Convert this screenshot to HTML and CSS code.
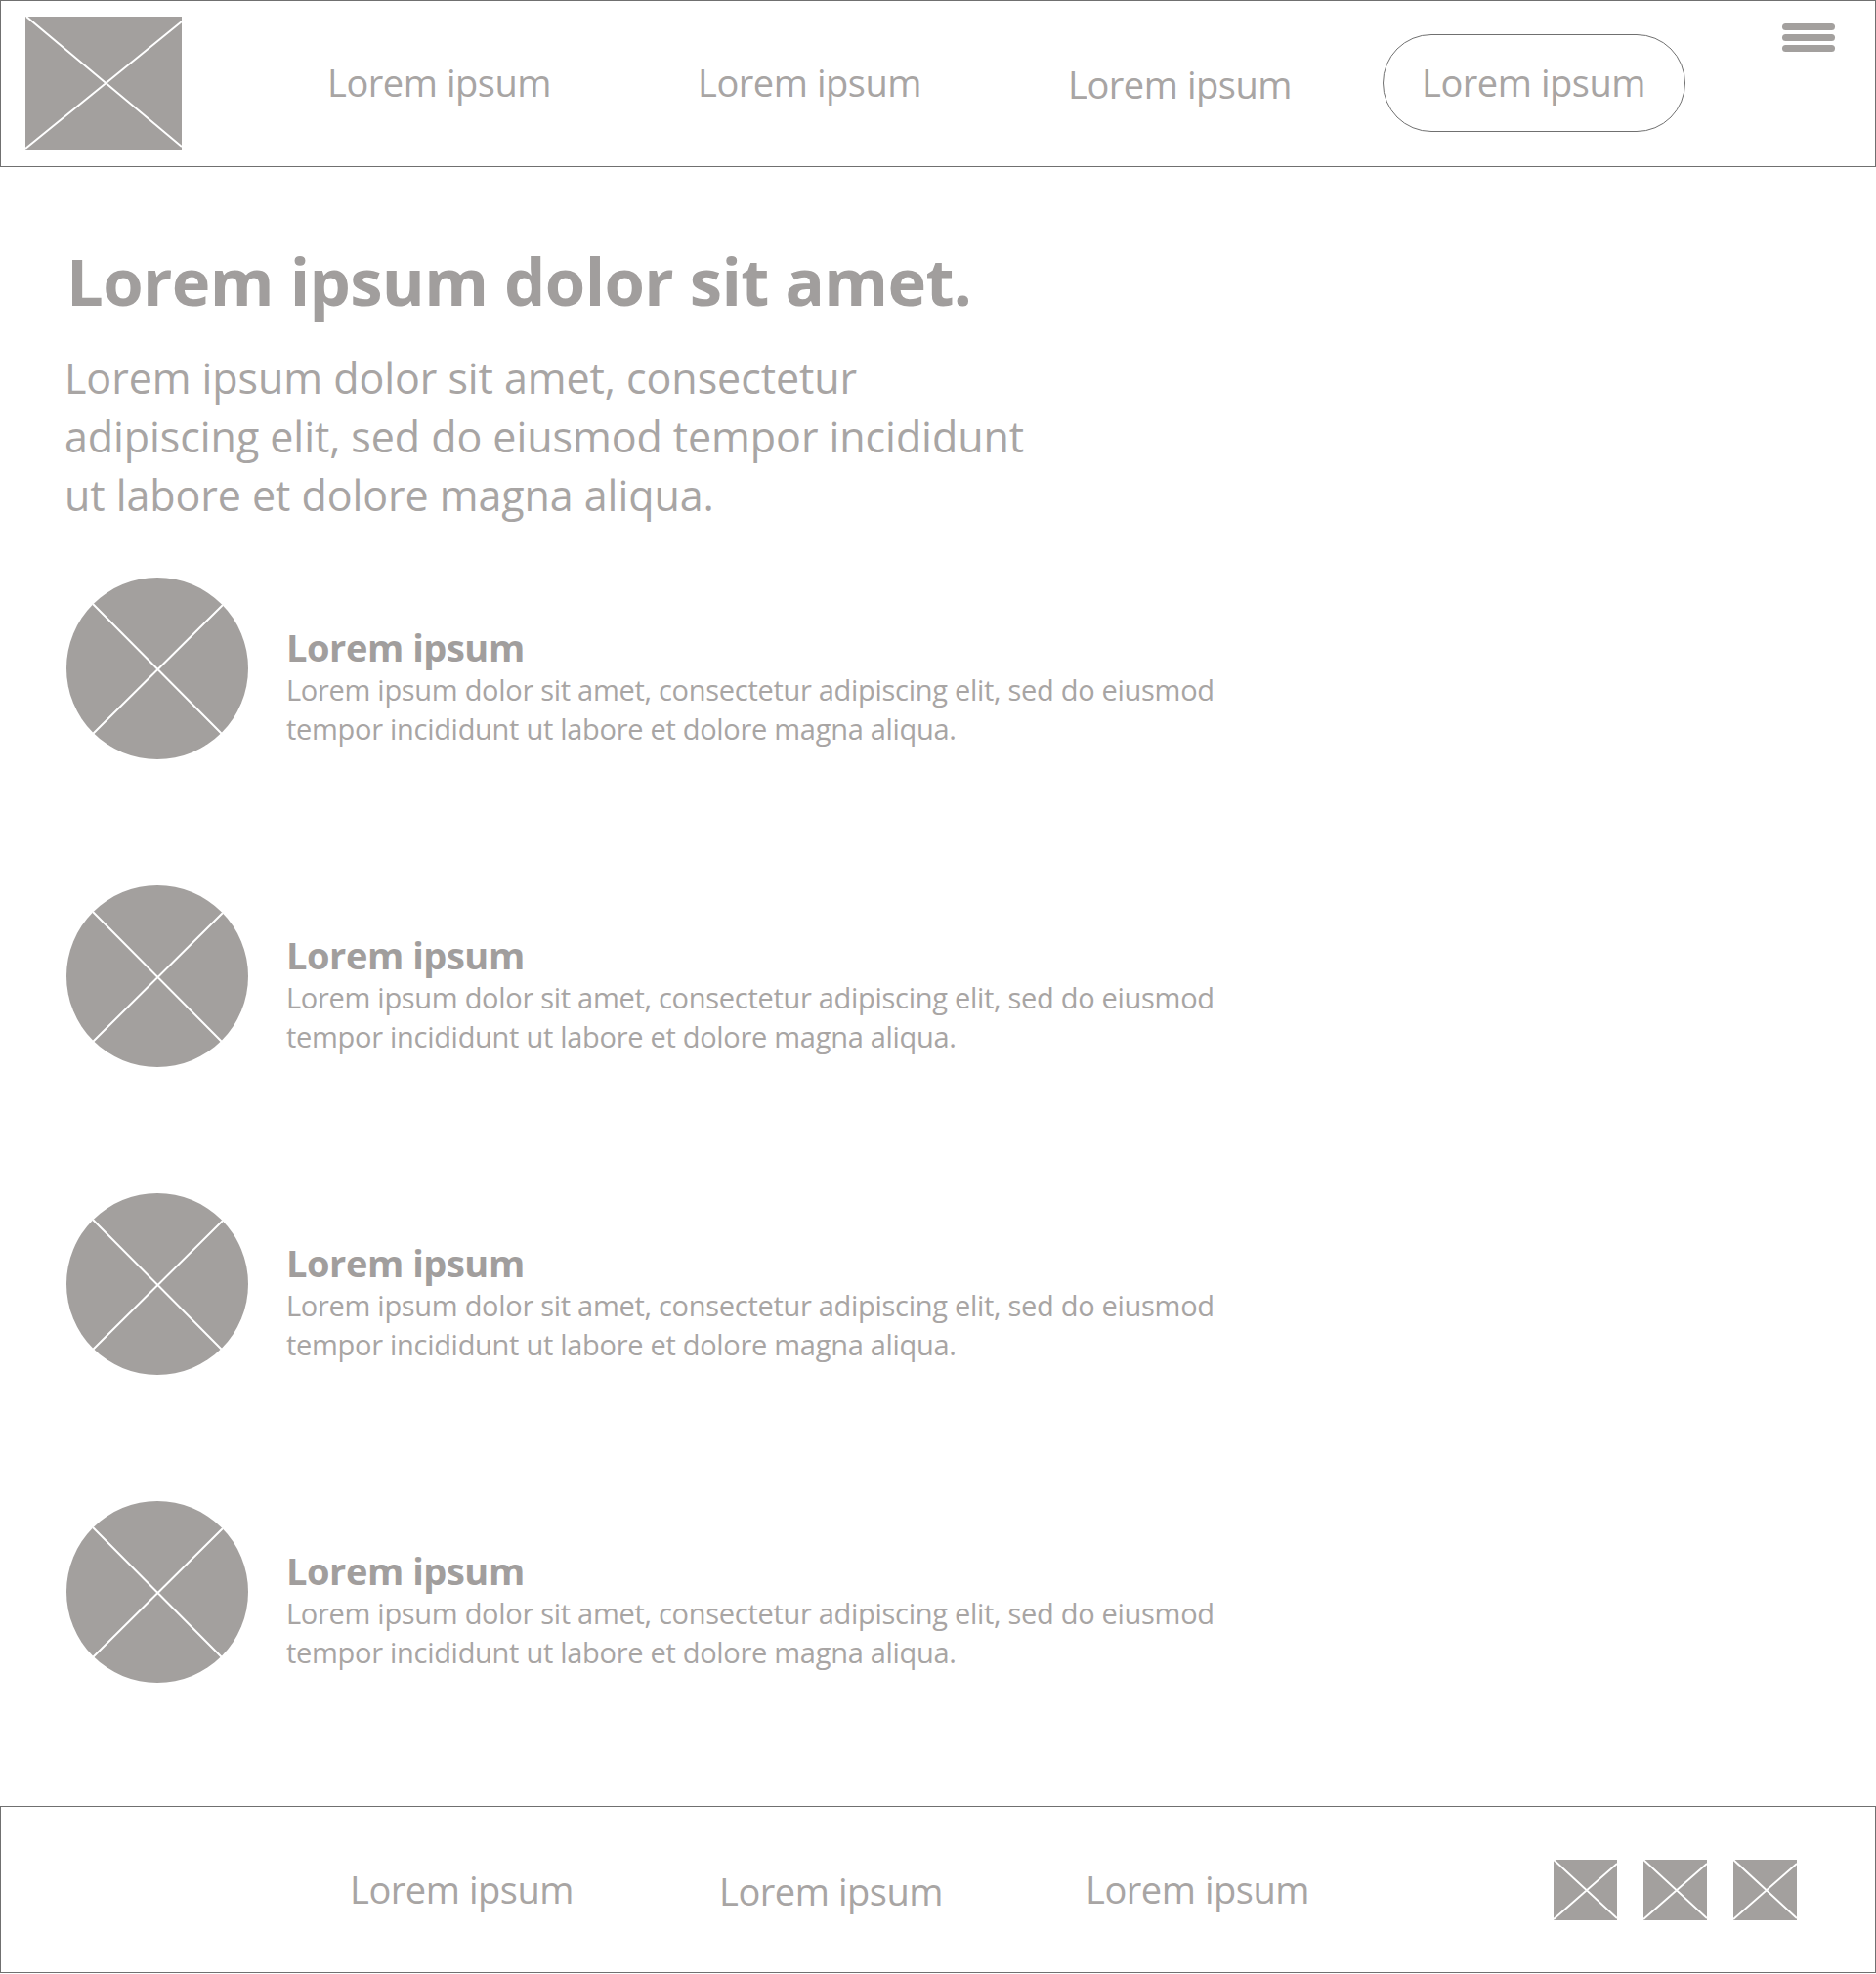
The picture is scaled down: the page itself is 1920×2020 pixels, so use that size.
FILE: index.html
```html
<!DOCTYPE html>
<html lang="la">
<head>
<meta charset="utf-8">
<title>Lorem ipsum</title>
<link rel="stylesheet" href="styles.css">
</head>
<body>
<svg class="defs" width="0" height="0" aria-hidden="true">
  <symbol id="ph-logo" viewBox="0 0 160 137" preserveAspectRatio="none">
    <rect width="160" height="137" fill="#a3a09e"/>
    <path d="M1 0 L160 133 M160 5 L0 135" stroke="#fff" stroke-width="2" fill="none"/>
  </symbol>
  <symbol id="ph-circle" viewBox="0 0 186 186">
    <circle cx="93" cy="93" r="93" fill="#a3a09e"/>
    <path d="M27 27 L159 160 M160 28 L27 160" stroke="#fff" stroke-width="2" fill="none"/>
  </symbol>
  <symbol id="ph-social" viewBox="0 0 65 62" preserveAspectRatio="none">
    <rect width="65" height="62" fill="#a3a09e"/>
    <path d="M0 0 L65 60 M65 4 L0 61" stroke="#fff" stroke-width="2" fill="none"/>
  </symbol>
</svg>

<header class="topbar">
  <svg class="logo"><use href="#ph-logo"/></svg>
  <nav class="topnav">
    <a class="navlink link-a">Lorem ipsum</a>
    <a class="navlink link-b">Lorem ipsum</a>
    <a class="navlink link-c low">Lorem ipsum</a>
    <a class="navlink pill">Lorem ipsum</a>
  </nav>
  <div class="burger"><span></span><span></span><span></span></div>
</header>

<main class="content">
  <h1 class="headline">Lorem ipsum dolor sit amet.</h1>
  <p class="lead">Lorem ipsum dolor sit amet, consectetur<br>adipiscing elit, sed do eiusmod tempor incididunt<br>ut labore et dolore magna aliqua.</p>
  <ul class="features">
    <li class="feature">
      <svg class="avatar"><use href="#ph-circle"/></svg>
      <div class="feature-text">
        <h2 class="feature-title">Lorem ipsum</h2>
        <p class="feature-body">Lorem ipsum dolor sit amet, consectetur adipiscing elit, sed do eiusmod<br>tempor incididunt ut labore et dolore magna aliqua.</p>
      </div>
    </li>
    <li class="feature">
      <svg class="avatar"><use href="#ph-circle"/></svg>
      <div class="feature-text">
        <h2 class="feature-title">Lorem ipsum</h2>
        <p class="feature-body">Lorem ipsum dolor sit amet, consectetur adipiscing elit, sed do eiusmod<br>tempor incididunt ut labore et dolore magna aliqua.</p>
      </div>
    </li>
    <li class="feature">
      <svg class="avatar"><use href="#ph-circle"/></svg>
      <div class="feature-text">
        <h2 class="feature-title">Lorem ipsum</h2>
        <p class="feature-body">Lorem ipsum dolor sit amet, consectetur adipiscing elit, sed do eiusmod<br>tempor incididunt ut labore et dolore magna aliqua.</p>
      </div>
    </li>
    <li class="feature">
      <svg class="avatar"><use href="#ph-circle"/></svg>
      <div class="feature-text">
        <h2 class="feature-title">Lorem ipsum</h2>
        <p class="feature-body">Lorem ipsum dolor sit amet, consectetur adipiscing elit, sed do eiusmod<br>tempor incididunt ut labore et dolore magna aliqua.</p>
      </div>
    </li>
  </ul>
</main>

<footer class="bottombar">
  <nav class="footnav">
    <a class="navlink foot-a">Lorem ipsum</a>
    <a class="navlink foot-b low">Lorem ipsum</a>
    <a class="navlink foot-c">Lorem ipsum</a>
  </nav>
  <div class="socials">
    <svg class="social"><use href="#ph-social"/></svg>
    <svg class="social"><use href="#ph-social"/></svg>
    <svg class="social"><use href="#ph-social"/></svg>
  </div>
</footer>
</body>
</html>
```
FILE: styles.css
```css
* { box-sizing: border-box; }
html, body { margin: 0; padding: 0; background: #fff; }
body {
  width: 1920px;
  height: 2020px;
  display: flex;
  flex-direction: column;
  font-family: "Open Sans", "Noto Sans", sans-serif;
  color: #a8a5a4;
}
.defs { position: absolute; }

.topbar {
  height: 171px;
  border: 1.5px solid #707070;
  display: flex;
  align-items: flex-start;
  padding: 16px 0 0 25px;
  flex: none;
}
.logo { width: 160px; height: 137px; flex: none; }
.topnav {
  display: flex;
  align-items: center;
  height: 135px;
  margin-left: 149px;
}
.navlink {
  font-size: 38px;
  line-height: 52px;
  white-space: nowrap;
  width: 229px;
  letter-spacing: -0.45px;
  padding-bottom: 2px;
}
.link-a { margin-right: 150px; }
.link-b { margin-right: 150px; }
.link-c { margin-right: 93px; }
.low { position: relative; top: 2px; }
.pill {
  width: 310px;
  height: 100px;
  border: 1px solid #707070;
  border-radius: 50px;
  padding: 0 0 2px 39px;
  display: flex;
  align-items: center;
}
.burger {
  width: 54px;
  margin: 7px 0 0 99px;
  display: flex;
  flex-direction: column;
  gap: 4px;
  flex: none;
}
.burger span { height: 7px; border-radius: 4px; background: #a3a09e; }

.content { flex: 1; padding: 77px 0 0 66px; }
.headline {
  margin: 0 0 0 2px;
  font-size: 67px;
  line-height: 78px;
  font-weight: 700;
  letter-spacing: -0.65px;
  color: #a19e9d;
}
.lead {
  margin: 31px 0 0;
  font-size: 43px;
  line-height: 60px;
  letter-spacing: -0.07px;
}
.features { list-style: none; margin: 54px 0 0 2px; padding: 0; display: flex; flex-direction: column; gap: 129px; }
.feature { display: flex; align-items: center; height: 186px; gap: 39px; }
.avatar { width: 186px; height: 186px; flex: none; }
.feature-text { margin-top: 36px; }
.feature-title {
  margin: 0;
  font-size: 38px;
  line-height: 47px;
  font-weight: 700;
  letter-spacing: -0.45px;
  color: #a19e9d;
}
.feature-body {
  margin: 0;
  font-size: 29px;
  line-height: 40px;
  letter-spacing: -0.29px;
}

.bottombar {
  height: 171px;
  margin-bottom: 1px;
  flex: none;
  border: 1.5px solid #707070;
  display: flex;
  align-items: center;
  padding-left: 357px;
}
.footnav { display: flex; align-items: center; }
.foot-a { margin-right: 149px; }
.foot-b { margin-right: 146px; }
.socials { display: flex; gap: 27px; margin-left: 250px; }
.social { width: 65px; height: 62px; flex: none; }
```
